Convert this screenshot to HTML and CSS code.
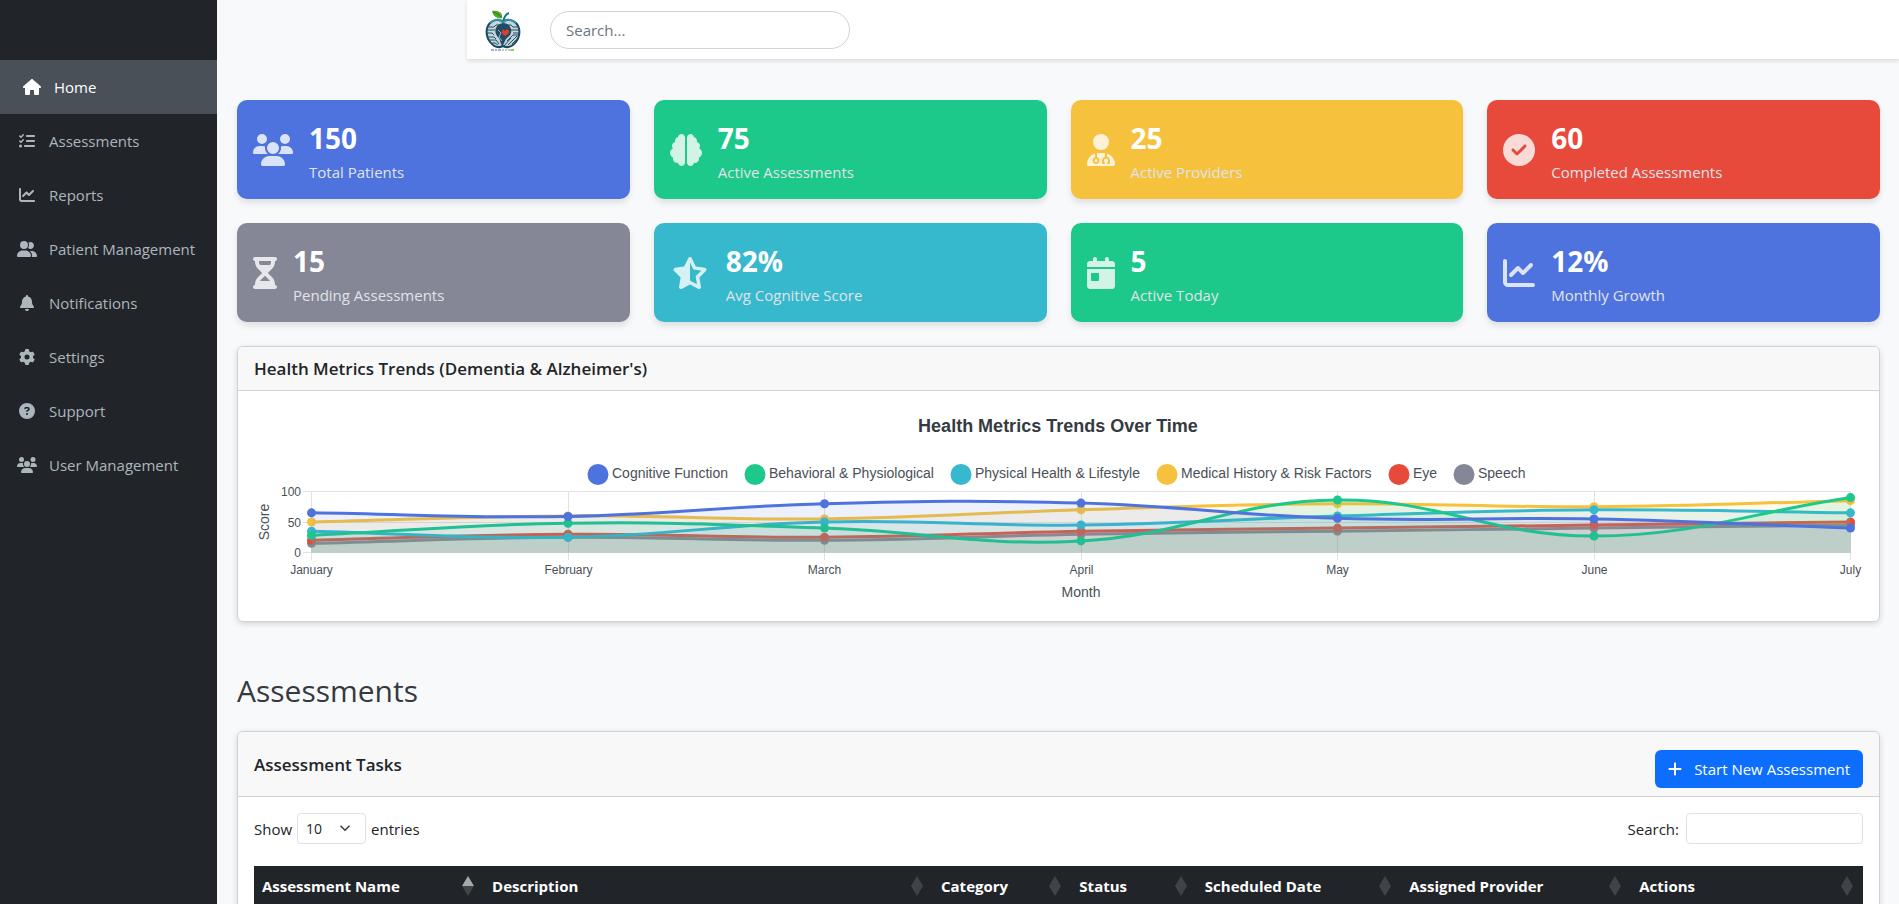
FILE: index.html
```html
<!DOCTYPE html>
<html lang="en">
<head>
<meta charset="utf-8">
<title>Dashboard</title>
<link rel="stylesheet" href="styles.css">
</head>
<body>
<svg class="sprite" aria-hidden="true">
  <symbol id="i-house" viewBox="0 0 576 512"><path d="M575.8 255.5c0 18-15 32.1-32 32.1h-32l.7 160.2c0 2.7-.2 5.4-.5 8.1V472c0 22.1-17.9 40-40 40H456c-1.1 0-2.2 0-3.3-.1c-1.4 .1-2.8 .1-4.2 .1H416 392c-22.1 0-40-17.9-40-40V448 384c0-17.7-14.3-32-32-32H256c-17.7 0-32 14.3-32 32v64 24c0 22.1-17.9 40-40 40H160 128.1c-1.5 0-3-.1-4.5-.2c-1.2 .1-2.4 .2-3.6 .2H104c-22.1 0-40-17.9-40-40V360c0-.9 0-1.9 .1-2.8V287.6H32c-18 0-32-14-32-32.1c0-9 3-17 10-24L266.4 8c7-7 15-8 22-8s15 2 21 7L564.8 231.5c8 7 12 15 11 24z"/></symbol>
  <symbol id="i-list" viewBox="0 0 512 512"><path d="M152.1 38.2c9.9 8.9 10.7 24 1.8 33.9l-72 80c-4.4 4.9-10.6 7.8-17.2 7.9s-12.9-2.4-17.6-7L7 113C-2.3 103.6-2.3 88.4 7 79s24.6-9.4 33.9 0l22.1 22.1 55.1-61.2c8.9-9.9 24-10.7 33.9-1.8zm0 160c9.9 8.9 10.7 24 1.8 33.9l-72 80c-4.4 4.9-10.6 7.8-17.2 7.9s-12.9-2.4-17.6-7L7 273c-9.4-9.4-9.4-24.6 0-33.9s24.6-9.4 33.9 0l22.1 22.1 55.1-61.2c8.9-9.9 24-10.7 33.9-1.8zM224 96c0-17.7 14.3-32 32-32H480c17.7 0 32 14.3 32 32s-14.3 32-32 32H256c-17.7 0-32-14.3-32-32zm0 160c0-17.7 14.3-32 32-32H480c17.7 0 32 14.3 32 32s-14.3 32-32 32H256c-17.7 0-32-14.3-32-32zM160 416c0-17.7 14.3-32 32-32H480c17.7 0 32 14.3 32 32s-14.3 32-32 32H192c-17.7 0-32-14.3-32-32zM48 368a48 48 0 1 1 0 96 48 48 0 1 1 0-96z"/></symbol>
  <symbol id="i-chart" viewBox="0 0 512 512"><path d="M64 64c0-17.7-14.3-32-32-32S0 46.3 0 64V400c0 44.2 35.8 80 80 80H480c17.7 0 32-14.3 32-32s-14.3-32-32-32H80c-8.8 0-16-7.2-16-16V64zm406.6 86.6c12.5-12.5 12.5-32.8 0-45.3s-32.8-12.5-45.3 0L320 210.7l-57.4-57.4c-12.5-12.5-32.8-12.5-45.3 0l-112 112c-12.5 12.5-12.5 32.8 0 45.3s32.8 12.5 45.3 0L240 221.3l57.4 57.4c12.5 12.5 32.8 12.5 45.3 0l128-128z"/></symbol>
  <symbol id="i-group" viewBox="0 0 640 512"><path d="M96 128a128 128 0 1 1 256 0A128 128 0 1 1 96 128zM0 482.3C0 383.8 79.8 304 178.3 304h91.4C368.2 304 448 383.8 448 482.3c0 16.4-13.3 29.7-29.7 29.7H29.7C13.3 512 0 498.7 0 482.3zM609.3 512H471.4c5.4-9.4 8.6-20.3 8.6-32v-8c0-60.7-27.1-115.2-69.8-151.8c2.4-.1 4.7-.2 7.1-.2h61.4C567.8 320 640 392.2 640 481.3c0 17-13.8 30.7-30.7 30.7zM432 256c-31 0-59-12.6-79.3-32.9C372.4 196.5 384 163.6 384 128c0-26.8-6.6-52.1-18.3-74.3C384.3 40.1 407.2 32 432 32c61.9 0 112 50.1 112 112s-50.1 112-112 112z"/></symbol>
  <symbol id="i-bell" viewBox="0 0 448 512"><path d="M224 0c-17.7 0-32 14.3-32 32V51.2C119 66 64 130.6 64 208v18.8c0 47-17.3 92.4-48.5 127.6l-7.4 8.3c-8.4 9.4-10.4 22.9-5.3 34.4S19.4 416 32 416H416c12.6 0 24-7.4 29.2-18.9s3.1-25-5.3-34.4l-7.4-8.3C401.3 319.2 384 273.9 384 226.8V208c0-77.4-55-142-128-156.8V32c0-17.7-14.3-32-32-32zm45.3 493.3c12-12 18.7-28.3 18.7-45.3H224 160c0 17 6.7 33.3 18.7 45.3s28.3 18.7 45.3 18.7s33.3-6.7 45.3-18.7z"/></symbol>
  <symbol id="i-gear" viewBox="0 0 512 512"><path d="M495.9 166.6c3.2 8.7 .5 18.4-6.4 24.6l-43.3 39.4c1.1 8.3 1.7 16.8 1.7 25.4s-.6 17.1-1.7 25.4l43.3 39.4c6.9 6.2 9.6 15.9 6.4 24.6c-4.4 11.9-9.7 23.3-15.8 34.3l-4.7 8.1c-6.6 11-14 21.4-22.1 31.2c-5.9 7.2-15.7 9.6-24.5 6.8l-55.7-17.7c-13.4 10.3-28.2 18.9-44 25.4l-12.5 57.1c-2 9.1-9 16.3-18.2 17.8c-13.8 2.3-28 3.5-42.5 3.5s-28.7-1.2-42.5-3.5c-9.2-1.5-16.2-8.7-18.2-17.8l-12.5-57.1c-15.8-6.5-30.6-15.1-44-25.4L83.1 425.9c-8.8 2.8-18.6 .3-24.5-6.8c-8.1-9.8-15.5-20.2-22.1-31.2l-4.7-8.1c-6.1-11-11.4-22.4-15.8-34.3c-3.2-8.7-.5-18.4 6.4-24.6l43.3-39.4C64.6 273.1 64 264.6 64 256s.6-17.1 1.7-25.4L22.4 191.2c-6.9-6.2-9.6-15.9-6.4-24.6c4.4-11.9 9.7-23.3 15.8-34.3l4.7-8.1c6.6-11 14-21.4 22.1-31.2c5.9-7.2 15.7-9.6 24.5-6.8l55.7 17.7c13.4-10.3 28.2-18.9 44-25.4l12.5-57.1c2-9.1 9-16.3 18.2-17.8C227.3 1.2 241.5 0 256 0s28.7 1.2 42.5 3.5c9.2 1.5 16.2 8.7 18.2 17.8l12.5 57.1c15.8 6.5 30.6 15.1 44 25.4l55.7-17.7c8.8-2.8 18.6-.3 24.5 6.8c8.1 9.8 15.5 20.2 22.1 31.2l4.7 8.1c6.1 11 11.4 22.4 15.8 34.3zM256 336a80 80 0 1 0 0-160 80 80 0 1 0 0 160z"/></symbol>
  <symbol id="i-question" viewBox="0 0 512 512"><path d="M256 512A256 256 0 1 0 256 0a256 256 0 1 0 0 512zM169.8 165.3c7.9-22.3 29.1-37.3 52.8-37.3h58.3c34.9 0 63.1 28.3 63.1 63.1c0 22.6-12.1 43.5-31.7 54.8L280 264.4c-.2 13-10.9 23.6-24 23.6c-13.3 0-24-10.7-24-24V250.5c0-8.6 4.6-16.5 12.1-20.8l44.3-25.4c4.7-2.7 7.6-7.7 7.6-13.1c0-8.4-6.8-15.1-15.1-15.1H222.6c-3.4 0-6.4 2.1-7.5 5.3l-.4 1.2c-4.4 12.5-18.2 19-30.6 14.6s-19-18.2-14.6-30.6l.4-1.2zM224 352a32 32 0 1 1 64 0 32 32 0 1 1 -64 0z"/></symbol>
  <symbol id="i-users" viewBox="0 0 640 512"><path d="M144 0a80 80 0 1 1 0 160A80 80 0 1 1 144 0zM512 0a80 80 0 1 1 0 160A80 80 0 1 1 512 0zM0 298.7C0 239.8 47.8 192 106.7 192h42.7c15.9 0 31 3.5 44.6 9.7c-1.3 7.2-1.9 14.7-1.9 22.3c0 38.2 16.8 72.5 43.3 96c-.2 0-.4 0-.7 0H21.3C9.6 320 0 310.4 0 298.7zM405.3 320c-.2 0-.4 0-.7 0c26.6-23.5 43.3-57.8 43.3-96c0-7.6-.7-15-1.9-22.3c13.6-6.3 28.7-9.7 44.6-9.7h42.7C592.2 192 640 239.8 640 298.7c0 11.8-9.6 21.3-21.3 21.3H405.3zM224 224a96 96 0 1 1 192 0 96 96 0 1 1 -192 0zM128 485.3C128 411.7 187.7 352 261.3 352H378.7C452.3 352 512 411.7 512 485.3c0 14.7-11.9 26.7-26.7 26.7H154.7c-14.7 0-26.7-11.9-26.7-26.7z"/></symbol>
  <symbol id="i-brain" viewBox="0 0 512 512"><path d="M184 0c30.9 0 56 25.1 56 56V456c0 30.9-25.1 56-56 56c-28.9 0-52.7-21.9-55.7-50.1c-5.2 1.4-10.7 2.1-16.3 2.1c-35.3 0-64-28.7-64-64c0-7.4 1.3-14.6 3.6-21.2C21.4 367.4 0 338.2 0 304c0-31.9 18.7-59.5 45.8-72.3C37.1 220.8 32 207 32 192c0-30.7 21.6-56.3 50.4-62.6C80.8 123.9 80 118 80 112c0-29.9 20.6-55.1 48.3-62.1C131.3 21.9 155.1 0 184 0zM328 0c28.9 0 52.6 21.9 55.7 49.9c27.8 7 48.3 32.1 48.3 62.1c0 6-.8 11.9-2.4 17.4c28.8 6.2 50.4 31.9 50.4 62.6c0 15-5.1 28.8-13.8 39.7C493.3 244.5 512 272.1 512 304c0 34.2-21.4 63.4-51.6 74.8c2.3 6.6 3.6 13.8 3.6 21.2c0 35.3-28.7 64-64 64c-5.6 0-11.1-.7-16.3-2.1c-3 28.2-26.8 50.1-55.7 50.1c-30.9 0-56-25.1-56-56V56c0-30.9 25.1-56 56-56z"/></symbol>
  <symbol id="i-doctor" viewBox="0 0 448 512"><path d="M224 256A128 128 0 1 0 224 0a128 128 0 1 0 0 256zm-96 55.2C54 332.9 0 401.3 0 482.3C0 498.7 13.3 512 29.7 512H418.3c16.4 0 29.7-13.3 29.7-29.7c0-81-54-149.4-128-171.1V362c27.6 7.1 48 32.2 48 62v40c0 8.8-7.2 16-16 16H336c-8.8 0-16-7.2-16-16s7.2-16 16-16V424c0-17.7-14.3-32-32-32s-32 14.3-32 32v24c8.8 0 16 7.2 16 16s-7.2 16-16 16H256c-8.8 0-16-7.2-16-16V424c0-29.8 20.4-54.9 48-62V304.9c-6-.6-12.1-.9-18.3-.9H178.3c-6.2 0-12.3 .3-18.3 .9v65.4c23.1 6.9 40 28.3 40 53.7c0 30.9-25.1 56-56 56s-56-25.1-56-56c0-25.4 16.9-46.8 40-53.7V311.2zM144 448a24 24 0 1 0 0-48 24 24 0 1 0 0 48z"/></symbol>
  <symbol id="i-check" viewBox="0 0 512 512"><path d="M256 512A256 256 0 1 0 256 0a256 256 0 1 0 0 512zM369 209L241 337c-9.4 9.4-24.6 9.4-33.9 0l-64-64c-9.4-9.4-9.4-24.6 0-33.9s24.6-9.4 33.9 0l47 47L335 175c9.4-9.4 24.6-9.4 33.9 0s9.4 24.6 0 33.9z"/></symbol>
  <symbol id="i-hourglass" viewBox="0 0 384 512"><path d="M32 0C14.3 0 0 14.3 0 32S14.3 64 32 64V75c0 42.4 16.9 83.1 46.9 113.1L146.7 256 78.9 323.9C48.9 353.9 32 394.6 32 437v11c-17.7 0-32 14.3-32 32s14.3 32 32 32H64 320h32c17.7 0 32-14.3 32-32s-14.3-32-32-32V437c0-42.4-16.9-83.1-46.9-113.1L237.3 256l67.9-67.9c30-30 46.9-70.7 46.9-113.1V64c17.7 0 32-14.3 32-32s-14.3-32-32-32H320 64 32zM96 75V64H288V75c0 19-5.6 37.4-16 53H112c-10.3-15.6-16-34-16-53zm16 309c3.5-5.3 7.6-10.3 12.1-14.9L192 301.3l67.9 67.9c4.6 4.6 8.6 9.6 12.1 14.9H112z"/></symbol>
  <symbol id="i-star" viewBox="0 0 640 512"><path d="M320 376.4l.1-.1 26.4 14.1 85.2 45.5-16.5-97.6-4.8-28.7 20.7-20.5 70.1-69.3-96.1-14.2-29.3-4.3-12.9-26.6L320.1 86.9l-.1 .3V376.4zm175.1 98.3c2 12-3 24.2-12.9 31.3s-23 8-33.8 2.3L320.1 439.8 191.8 508.3C181 514 167.9 513.1 158 506s-14.9-19.3-12.9-31.3L169.8 329 65.6 225.9c-8.6-8.5-11.7-21.2-7.9-32.7s13.7-19.9 25.7-21.7L227 150.3 291.4 18c5.4-11 16.5-18 28.8-18s23.4 7 28.8 18l64.3 132.3 143.6 21.2c12 1.8 22 10.2 25.7 21.7s.7 24.2-7.9 32.7L470.5 329l24.6 145.7z"/></symbol>
  <symbol id="i-calendar" viewBox="0 0 448 512"><path d="M128 0c17.7 0 32 14.3 32 32V64H288V32c0-17.7 14.3-32 32-32s32 14.3 32 32V64h48c26.5 0 48 21.5 48 48v48H0V112C0 85.5 21.5 64 48 64H96V32c0-17.7 14.3-32 32-32zM0 192H448V464c0 26.5-21.5 48-48 48H48c-26.5 0-48-21.5-48-48V192zm80 64c-8.8 0-16 7.2-16 16v96c0 8.8 7.2 16 16 16h96c8.8 0 16-7.2 16-16V272c0-8.8-7.2-16-16-16H80z"/></symbol>
  <symbol id="i-plus" viewBox="0 0 448 512"><path d="M256 80c0-17.7-14.3-32-32-32s-32 14.3-32 32V224H48c-17.7 0-32 14.3-32 32s14.3 32 32 32H192V432c0 17.7 14.3 32 32 32s32-14.3 32-32V288H400c17.7 0 32-14.3 32-32s-14.3-32-32-32H256V80z"/></symbol>
  <symbol id="i-sort" viewBox="0 0 12 20"><path class="sort-up" d="M6 0l6 10H0z"/><path class="sort-down" d="M6 20l6-10H0z"/></symbol>
</svg>

<div class="app">
  <nav class="sidebar" aria-label="Main">
    <a class="nav-item active" href="#"><svg class="nav-icon"><use href="#i-house"/></svg>Home</a>
    <a class="nav-item" href="#"><svg class="nav-icon"><use href="#i-list"/></svg>Assessments</a>
    <a class="nav-item" href="#"><svg class="nav-icon"><use href="#i-chart"/></svg>Reports</a>
    <a class="nav-item" href="#"><svg class="nav-icon"><use href="#i-group"/></svg>Patient Management</a>
    <a class="nav-item" href="#"><svg class="nav-icon"><use href="#i-bell"/></svg>Notifications</a>
    <a class="nav-item" href="#"><svg class="nav-icon"><use href="#i-gear"/></svg>Settings</a>
    <a class="nav-item" href="#"><svg class="nav-icon"><use href="#i-question"/></svg>Support</a>
    <a class="nav-item" href="#"><svg class="nav-icon"><use href="#i-users"/></svg>User Management</a>
  </nav>

  <div class="page">
    <header class="topbar">
      <svg class="logo" viewBox="0 0 40 42" role="img" aria-label="Logo">
        <path d="M20 12c1-5 3-8 6-9" fill="none" stroke="#1f6f86" stroke-width="2"/>
        <path d="M19 8C15 9 10 7 9 1c7-1 11 2 10 7z" fill="#55a828"/>
        <path d="M10 2c4 1 6 3 9 6" fill="none" stroke="#2f7d1c"/>
        <path d="M20 12c-3-3-9-3-13 1-5 5-4 14 0 19 4 5 9 6 13 4 4 2 9 1 13-4 4-5 5-14 0-19-4-4-10-4-13-1z" fill="#c3d4db" stroke="#1d4a60" stroke-width="2"/>
        <path d="M7 13c4-4 9-4 13-1 4-3 9-3 13 1" fill="none" stroke="#2c93a8" stroke-width="2"/>
        <g fill="none" stroke="#264f63" stroke-width="1">
          <path d="M5 17h6l2-2h4M4 20h8M4 23h5l2 2M5 27h6l2 2M7 30h6l3 4M9 33h3l3 2M24 15h4l2 2h5M28 20h8M30 23h6M27 28l3-3h5M24 31l5-5M25 35l9-9M21 36l7-8M29 34l5-5"/>
        </g>
        <path d="M20 13c-6 1-9 6-7 11 1 3 4 4 4 7l2 5c3-3 2-5 5-8 3-2 5-5 4-9-1-4-4-6-8-6z" fill="#234c62"/>
        <path d="M15 20l3 3-2 4 3 4" fill="none" stroke="#8fb6c4"/>
        <path d="M22 26c-3-2-4-4-3-5 1-2 2-2 3 0 1-2 3-2 4 0 1 1-1 3-4 5z" fill="#e23b2e"/>
        <path d="M8 40h3m1 0h2m1 0h3" stroke="#3c5fb5" stroke-width="1"/>
        <path d="M19 40h2m1 0h2m1 0h3" stroke="#8a939c" stroke-width="1"/>
        <path d="M28 40h3" stroke="#7ddc45" stroke-width="2"/>
      </svg>
      <input class="top-search" type="search" placeholder="Search..." aria-label="Search">
    </header>

    <main class="content">
      <section class="stats" aria-label="Statistics">
        <article class="stat blue"><svg class="stat-icon w40"><use href="#i-users"/></svg><div><h3>150</h3><p>Total Patients</p></div></article>
        <article class="stat green"><svg class="stat-icon w32"><use href="#i-brain"/></svg><div><h3>75</h3><p>Active Assessments</p></div></article>
        <article class="stat yellow"><svg class="stat-icon w28"><use href="#i-doctor"/></svg><div><h3>25</h3><p>Active Providers</p></div></article>
        <article class="stat red"><svg class="stat-icon w32"><use href="#i-check"/></svg><div><h3>60</h3><p>Completed Assessments</p></div></article>
        <article class="stat gray"><svg class="stat-icon w24"><use href="#i-hourglass"/></svg><div><h3>15</h3><p>Pending Assessments</p></div></article>
        <article class="stat teal"><svg class="stat-icon w40"><use href="#i-star"/></svg><div><h3>82%</h3><p>Avg Cognitive Score</p></div></article>
        <article class="stat green"><svg class="stat-icon w28"><use href="#i-calendar"/></svg><div><h3>5</h3><p>Active Today</p></div></article>
        <article class="stat blue"><svg class="stat-icon w32"><use href="#i-chart"/></svg><div><h3>12%</h3><p>Monthly Growth</p></div></article>
      </section>

      <section class="card">
        <div class="card-head"><h5>Health Metrics Trends (Dementia &amp; Alzheimer's)</h5></div>
        <div class="card-body">
          <svg class="chart" id="chart" viewBox="0 0 1609 198" role="img" aria-label="Health Metrics Trends Over Time"></svg>
        </div>
      </section>

      <h2 class="section-title">Assessments</h2>

      <section class="card">
        <div class="card-head tasks-head">
          <h5>Assessment Tasks</h5>
          <button class="btn" type="button"><svg class="btn-icon"><use href="#i-plus"/></svg>Start New Assessment</button>
        </div>
        <div class="card-body">
          <div class="table-tools">
            <label class="tool">Show
              <span class="select-wrap">
                <select><option>10</option><option>25</option><option>50</option><option>100</option></select>
                <svg class="chevron" viewBox="0 0 16 16"><path d="M2 5l6 6 6-6"/></svg>
              </span>
              entries</label>
            <label class="tool search-tool">Search:<input type="search"></label>
          </div>
          <table class="tasks">
            <colgroup><col class="c-name"><col class="c-desc"><col class="c-cat"><col class="c-status"><col class="c-date"><col class="c-prov"><col class="c-act"></colgroup>
            <thead><tr>
              <th class="sorted"><span class="th">Assessment Name<svg class="sort"><use href="#i-sort"/></svg></span></th>
              <th><span class="th">Description<svg class="sort"><use href="#i-sort"/></svg></span></th>
              <th><span class="th">Category<svg class="sort"><use href="#i-sort"/></svg></span></th>
              <th><span class="th">Status<svg class="sort"><use href="#i-sort"/></svg></span></th>
              <th><span class="th">Scheduled Date<svg class="sort"><use href="#i-sort"/></svg></span></th>
              <th><span class="th">Assigned Provider<svg class="sort"><use href="#i-sort"/></svg></span></th>
              <th><span class="th">Actions<svg class="sort"><use href="#i-sort"/></svg></span></th>
            </tr></thead>
          </table>
        </div>
      </section>
    </main>
  </div>
</div>
<script src="chart.js"></script>
</body>
</html>
```
FILE: styles.css
```css
* { box-sizing: border-box; }
body {
  margin: 0;
  background: #f8f9fa;
  color: #212529;
  font: 15px/24px "Segoe UI", "Open Sans", "Noto Sans", sans-serif;
}
h2, h3, h5, p { margin: 0; }
button, input, select { font: inherit; color: inherit; }
svg { fill: currentColor; flex: none; }
.sprite { display: none; }

.app { display: flex; height: 100vh; overflow: hidden; }
.sidebar {
  flex: 0 0 217px;
  padding-top: 60px;
  background: #212529;
}
.nav-item {
  display: flex;
  align-items: center;
  gap: 10px;
  padding: 15px;
  color: #adb5bd;
  text-decoration: none;
  white-space: nowrap;
}
.nav-item.active { padding-left: 20px; background: #495057; color: #fff; }
.nav-icon { width: 24px; height: 16px; }

.page { flex: 1; min-width: 0; }
.topbar {
  display: flex;
  align-items: center;
  gap: 27px;
  height: 59px;
  margin-left: 250px;
  padding: 0 16px;
  background: #fff;
  box-shadow: 0 2px 4px rgba(0, 0, 0, .12);
}
.logo { width: 40px; height: 42px; margin-top: 2px; }
.top-search {
  width: 300px;
  height: 38px;
  padding: 6px 15px;
  border: 1px solid #ced4da;
  border-radius: 19px;
  background: #fff;
  outline: 0;
}
.top-search::placeholder { color: #6c757d; opacity: 1; }

.content { padding: 41px 19px 20px 20px; }
.stats { display: grid; grid-template-columns: repeat(4, 1fr); gap: 24px; margin-bottom: 24px; }
.stat {
  display: flex;
  align-items: center;
  gap: 16px;
  padding: 16px;
  border-radius: 10px;
  color: #fff;
  box-shadow: 0 4px 6px rgba(0, 0, 0, .1);
}
.stat h3 { font-size: 28px; font-weight: 700; line-height: 45px; }
.stat p { color: #e0e3e8; line-height: 22px; }
.stat-icon { height: 32px; opacity: .8; }
.w24 { width: 24px; }
.w28 { width: 28px; }
.w32 { width: 32px; }
.w40 { width: 40px; }
.blue { background: #4e73df; }
.green { background: #1cc88a; }
.yellow { background: #f6c23e; }
.red { background: #e74a3b; }
.gray { background: #858796; }
.teal { background: #36b9cc; }

.card {
  border: 1px solid #d0d1d3;
  border-radius: 6px;
  background: #fff;
  box-shadow: 0 2px 6px rgba(0, 0, 0, .14);
}
.card-head {
  padding: 8px 16px;
  border-bottom: 1px solid #d0d1d3;
  border-radius: 5px 5px 0 0;
  background: #f8f8f8;
}
.card-head h5 { font-size: 17px; font-weight: 600; line-height: 27px; }
.card-body { padding: 16px; }
.chart {
  display: block;
  width: 100%;
  height: auto;
  fill: #495057;
  font-family: Arial, "Liberation Sans", sans-serif;
  font-size: 14px;
}
.chart .title { font-size: 18px; font-weight: 700; fill: #343a40; }
.chart .tick { font-size: 12px; }
.chart .grid { stroke: #e2e2e2; }
.chart .line { fill: none; stroke-width: 3; }
.chart .area { fill-opacity: .1; }

.section-title {
  margin: 48px 0 19px;
  color: #343a40;
  font-size: 30px;
  font-weight: 500;
  line-height: 42px;
}
.tasks-head {
  display: flex;
  justify-content: space-between;
  align-items: flex-start;
  padding-top: 18px;
}
.tasks-head h5 { line-height: 29px; }
.btn {
  display: flex;
  align-items: center;
  gap: 12px;
  padding: 7px 13px;
  border: 0;
  border-radius: 6px;
  background: #0d6efd;
  color: #fff;
}
.btn-icon { width: 14px; height: 16px; }
.table-tools { display: flex; justify-content: space-between; margin-bottom: 22px; }
.tool { display: flex; align-items: center; gap: 5px; }
.search-tool { gap: 7px; }
.tool input, .tool select {
  height: 31px;
  border: 1px solid #dee2e6;
  border-radius: 4px;
  background: #fff;
  outline: 0;
}
.tool input { width: 177px; padding: 4px 8px; }
.select-wrap { position: relative; display: flex; }
.tool select { width: 69px; padding: 0 8px; font-size: 14px; appearance: none; }
.chevron {
  position: absolute;
  top: 9px;
  right: 15px;
  width: 12px;
  height: 12px;
  fill: none;
  stroke: #343a40;
  stroke-width: 2;
  pointer-events: none;
}
.tasks { width: 100%; border-collapse: collapse; table-layout: fixed; }
.tasks th {
  padding: 8px;
  background: #212529;
  color: #fff;
  font-weight: 700;
  text-align: left;
  white-space: nowrap;
}
.c-name { width: 14.3%; }
.c-desc { width: 27.9%; }
.c-cat { width: 8.6%; }
.c-status { width: 7.8%; }
.c-date { width: 12.7%; }
.c-prov { width: 14.3%; }
.c-act { width: 14.4%; }
.th { display: flex; align-items: center; justify-content: space-between; padding-right: 2px; }
.sort { width: 12px; height: 20px; color: #404347; }
.sorted .sort { --up: #a6a8a9; }
.sort-up { fill: var(--up, currentColor); }
```
FILE: chart.js
```js
const svg = document.getElementById("chart");
const NS = "http://www.w3.org/2000/svg";
const months = ["January", "February", "March", "April", "May", "June", "July"];
const series = [
  { name: "Cognitive Function", color: "#4e73df", legend: 344, data: [65, 59, 80, 81, 56, 55, 40] },
  { name: "Behavioral & Physiological", color: "#1cc88a", legend: 501, data: [28, 48, 40, 19, 86, 27, 90] },
  { name: "Physical Health & Lifestyle", color: "#36b9cc", legend: 707, data: [35, 25, 50, 45, 60, 70, 65] },
  { name: "Medical History & Risk Factors", color: "#f6c23e", legend: 913, data: [50, 60, 55, 70, 80, 75, 85] },
  { name: "Eye", color: "#e74a3b", legend: 1145, data: [20, 30, 25, 35, 40, 45, 50] },
  { name: "Speech", color: "#858796", legend: 1210, data: [15, 25, 20, 30, 35, 40, 45] }
];
const plot = { left: 57, right: 1596, top: 84, bottom: 145 };
const tension = 0.4;

function add(tag, attrs, text) {
  const el = document.createElementNS(NS, tag);
  for (const key in attrs) el.setAttribute(key, attrs[key]);
  if (text !== undefined) el.textContent = text;
  svg.appendChild(el);
}
const px = i => plot.left + (plot.right - plot.left) * i / (months.length - 1);
const py = v => plot.bottom - (plot.bottom - plot.top) * v / 100;

function curve(points) {
  const handles = points.map((p, i) => {
    const a = points[Math.max(i - 1, 0)];
    const b = points[Math.min(i + 1, points.length - 1)];
    const d1 = Math.hypot(p[0] - a[0], p[1] - a[1]);
    const d2 = Math.hypot(b[0] - p[0], b[1] - p[1]);
    const f1 = tension * d1 / (d1 + d2);
    const f2 = tension * d2 / (d1 + d2);
    const dx = b[0] - a[0], dy = b[1] - a[1];
    return [[p[0] - f1 * dx, p[1] - f1 * dy], [p[0] + f2 * dx, p[1] + f2 * dy]];
  });
  let d = `M${points[0]}`;
  for (let i = 1; i < points.length; i++) {
    d += `C${handles[i - 1][1]} ${handles[i][0]} ${points[i]}`;
  }
  return d;
}

add("text", { class: "title", x: 804, y: 25, "text-anchor": "middle" }, "Health Metrics Trends Over Time");
for (const v of [0, 50, 100]) {
  const y = Math.round(py(v)) + 0.5;
  add("path", { class: "grid", d: `M${plot.left - 8} ${y}H${plot.right}` });
  add("text", { class: "tick", x: 47, y: y + 4, "text-anchor": "end" }, v);
}
months.forEach((m, i) => {
  const x = Math.round(px(i)) + 0.5;
  add("path", { class: "grid", d: `M${x} ${plot.top}V${plot.bottom + 8}` });
  add("text", { class: "tick", x, y: 167, "text-anchor": "middle" }, m);
});
add("text", { x: 827, y: 190, "text-anchor": "middle" }, "Month");
add("text", { x: 0, y: 0, transform: "translate(15 115) rotate(-90)", "text-anchor": "middle" }, "Score");

[...series].reverse().forEach(s => {
  const pts = s.data.map((v, i) => [px(i) + 0.5, py(v) + 0.5]);
  const d = curve(pts);
  add("path", { class: "area", fill: s.color, d: `${d}V${plot.bottom + 0.5}H${plot.left + 0.5}Z` });
  add("path", { class: "line", stroke: s.color, d });
  pts.forEach(p => add("circle", { cx: p[0], cy: p[1], r: 4.5, fill: s.color }));
});
series.forEach(s => {
  add("circle", { cx: s.legend, cy: 67.5, r: 10.5, fill: s.color });
  add("text", { x: s.legend + 14, y: 71 }, s.name);
});
```
